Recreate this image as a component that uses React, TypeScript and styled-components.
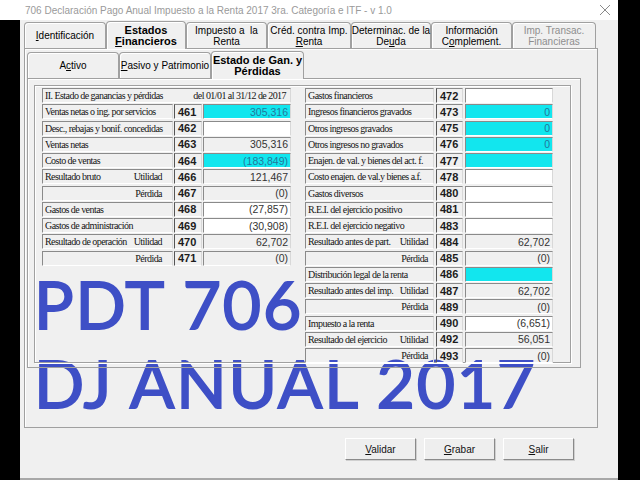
import React from 'react';
import styled, { createGlobalStyle } from 'styled-components';

const Global = createGlobalStyle`
  html, body { margin: 0; padding: 0; background: #000; }
  body { width: 640px; height: 480px; overflow: hidden; font-family: "Liberation Sans", Arial, sans-serif; }
  * { box-sizing: border-box; }
`;

const Page = styled.div`
  position: relative;
  width: 640px;
  height: 480px;
  display: flex;
  background: #000;
`;

const Main = styled.div`
  width: 618px;
  display: flex;
  flex-direction: column;
`;

const TitleBar = styled.div`
  height: 20px;
  background: #fff;
  display: flex;
  align-items: center;
  justify-content: space-between;
  padding: 0 7px 0 25px;
`;

const Title = styled.span`
  font-size: 10px;
  color: #9a9a9a;
  white-space: nowrap;
`;

const Body = styled.div`
  flex: 1;
  display: flex;
  min-height: 0;
`;

const LeftEdge = styled.div`
  width: 21px;
  background: #000;
`;

const Window = styled.div`
  flex: 1;
  background: #f0f0f0;
  border-bottom: 2px solid #a8a8a8;
  padding: 1px 20px 0 4px;
  display: flex;
  flex-direction: column;
`;

const TabRow = styled.div<{ $h: number }>`
  display: flex;
  align-items: flex-end;
  height: ${p => p.$h}px;
  position: relative;
  z-index: 2;
`;

const Tab = styled.div<{ $w: number; $active?: boolean; $disabled?: boolean; $h: number }>`
  width: ${p => p.$w}px;
  height: ${p => (p.$active ? p.$h + 2 : p.$h)}px;
  margin-bottom: ${p => (p.$active ? -1 : 0)}px;
  background: #f0f0f0;
  border: 1px solid #a0a0a0;
  border-bottom: none;
  box-shadow: inset 1px 1px 0 #fff;
  border-radius: 4px 4px 0 0;
  display: flex;
  flex-direction: column;
  align-items: center;
  justify-content: center;
  text-align: center;
  font-size: ${p => (p.$active ? 11 : 10)}px;
  font-weight: ${p => (p.$active ? 700 : 400)};
  line-height: 11px;
  color: ${p => (p.$disabled ? '#8e8e8e' : '#000')};
  white-space: nowrap;
`;

const U = styled.span`
  text-decoration: underline;
`;

const Panel = styled.div<{ $w: number; $h: number; $pad: string }>`
  width: ${p => p.$w}px;
  height: ${p => p.$h}px;
  border: 1px solid #a0a0a0;
  box-shadow: inset 1px 1px 0 #fff;
  padding: ${p => p.$pad};
  display: flex;
  flex-direction: column;
  position: relative;
  z-index: 1;
`;

const GroupBox = styled.div`
  width: 537px;
  height: 278px;
  border: 1px solid #a0a0a0;
  box-shadow: inset 1px 1px 0 #fff, 1px 1px 0 #fff;
  padding: 2px 0 0 7px;
  display: flex;
  gap: 14px;
  align-items: flex-start;
`;

const Column = styled.div<{ $cols: string; $colGap: number }>`
  display: grid;
  grid-template-columns: ${p => p.$cols};
  grid-auto-rows: 15px;
  column-gap: ${p => p.$colGap}px;
  row-gap: 1.25px;
`;

const Cell = styled.div`
  height: 15px;
  border: 1px solid;
  border-color: #8a8a8a #d8d8d8 #fff #8a8a8a;
  display: flex;
  align-items: center;
  white-space: nowrap;
  overflow: hidden;
`;

const LabelCell = styled(Cell)<{ $sidePad: number }>`
  justify-content: space-between;
  gap: 4px;
  padding: 0 ${p => p.$sidePad}px 0 2px;
  font-family: "Liberation Serif", "Times New Roman", serif;
  font-size: 10px;
  letter-spacing: -0.55px;
  color: #151515;
`;

const HeaderCell = styled(LabelCell)`
  grid-column: 1 / -1;
  padding-right: 4px;
`;

const CodeCell = styled(Cell)`
  padding-left: 3px;
  font-size: 11px;
  font-weight: 700;
  color: #1c1c1c;
  border-left-color: #555;
`;

const ValueCell = styled(Cell)<{ $bg: 'cyan' | 'white' | 'none' }>`
  justify-content: flex-end;
  padding-right: 2px;
  font-size: 10.5px;
  background: ${p => (p.$bg === 'cyan' ? '#12e6ee' : p.$bg === 'white' ? '#fff' : 'transparent')};
  color: ${p => (p.$bg === 'cyan' ? '#22789c' : '#333')};
`;

const ButtonRow = styled.div`
  display: flex;
  justify-content: flex-end;
  gap: 8px;
  padding-right: 24px;
  margin-top: 10px;
`;

const Button = styled.div`
  width: 71px;
  height: 22px;
  background: #eeeeee;
  border: 1px solid;
  border-color: #fff #8a8a8a #8a8a8a #fff;
  box-shadow: 1px 1px 0 #d0d0d0;
  display: flex;
  align-items: center;
  justify-content: center;
  font-size: 10px;
  color: #111;
`;

const RightEdge = styled.div`
  flex: 1;
  background: #000;
`;

const BigText = styled.div<{ $top: number }>`
  position: absolute;
  left: 34px;
  top: ${p => p.$top}px;
  font-family: Lato, "Open Sans", sans-serif;
  font-weight: 400;
  font-size: 66px;
  line-height: 48px;
  color: #3e4fc6;
  -webkit-text-stroke: 1.8px #3e4fc6;
  white-space: nowrap;
  letter-spacing: 1.8px;
`;

type Row = { label: string; side?: string; code: string; value: string; bg: 'cyan' | 'white' | 'none' };

const leftRows: Row[] = [
  { label: 'Ventas netas o ing. por servicios', code: '461', value: '305,316', bg: 'cyan' },
  { label: 'Desc., rebajas y bonif. concedidas', code: '462', value: '', bg: 'white' },
  { label: 'Ventas netas', code: '463', value: '305,316', bg: 'none' },
  { label: 'Costo de ventas', code: '464', value: '(183,849)', bg: 'cyan' },
  { label: 'Resultado bruto', side: 'Utilidad', code: '466', value: '121,467', bg: 'none' },
  { label: '', side: 'Pérdida', code: '467', value: '(0)', bg: 'none' },
  { label: 'Gastos de ventas', code: '468', value: '(27,857)', bg: 'white' },
  { label: 'Gastos de administración', code: '469', value: '(30,908)', bg: 'white' },
  { label: 'Resultado de operación', side: 'Utilidad', code: '470', value: '62,702', bg: 'none' },
  { label: '', side: 'Pérdida', code: '471', value: '(0)', bg: 'none' },
];

const rightRows: Row[] = [
  { label: 'Gastos financieros', code: '472', value: '', bg: 'white' },
  { label: 'Ingresos financieros gravados', code: '473', value: '0', bg: 'cyan' },
  { label: 'Otros ingresos gravados', code: '475', value: '0', bg: 'cyan' },
  { label: 'Otros ingresos no gravados', code: '476', value: '0', bg: 'cyan' },
  { label: 'Enajen. de val. y bienes del act. f.', code: '477', value: '', bg: 'cyan' },
  { label: 'Costo enajen. de val.y bienes a.f.', code: '478', value: '', bg: 'white' },
  { label: 'Gastos diversos', code: '480', value: '', bg: 'white' },
  { label: 'R.E.I. del ejercicio positivo', code: '481', value: '', bg: 'white' },
  { label: 'R.E.I. del ejercicio negativo', code: '483', value: '', bg: 'white' },
  { label: 'Resultado antes de part.', side: 'Utilidad', code: '484', value: '62,702', bg: 'none' },
  { label: '', side: 'Pérdida', code: '485', value: '(0)', bg: 'none' },
  { label: 'Distribución legal de la renta', code: '486', value: '', bg: 'cyan' },
  { label: 'Resultado antes del imp.', side: 'Utilidad', code: '487', value: '62,702', bg: 'none' },
  { label: '', side: 'Pérdida', code: '489', value: '(0)', bg: 'none' },
  { label: 'Impuesto a la renta', code: '490', value: '(6,651)', bg: 'white' },
  { label: 'Resultado del ejercicio', side: 'Utilidad', code: '492', value: '56,051', bg: 'none' },
  { label: '', side: 'Pérdida', code: '493', value: '(0)', bg: 'none' },
];

const renderRows = (rows: Row[], sidePad: number) =>
  rows.map(r => (
    <React.Fragment key={r.code}>
      <LabelCell $sidePad={sidePad}>
        <span>{r.label}</span>
        {r.side && <span>{r.side}</span>}
      </LabelCell>
      <CodeCell>{r.code}</CodeCell>
      <ValueCell $bg={r.bg}>{r.value}</ValueCell>
    </React.Fragment>
  ));

const CloseIcon = () => (
  <svg width="12" height="12" viewBox="0 0 12 12">
    <path d="M1 1 L11 11 M11 1 L1 11" stroke="#8a8a8a" strokeWidth="1" />
  </svg>
);

export default function App() {
  return (
    <>
      <Global />
      <Page>
        <Main>
          <TitleBar>
            <Title>706 Declaración Pago Anual Impuesto a la Renta 2017 3ra. Categoría e ITF - v 1.0</Title>
            <CloseIcon />
          </TitleBar>
          <Body>
            <LeftEdge />
            <Window>
              <TabRow $h={27}>
                <Tab $w={82} $h={26}><span><U>I</U>dentificación</span></Tab>
                <Tab $w={80} $h={26} $active><span>Estados</span><span><U>F</U>inancieros</span></Tab>
                <Tab $w={81} $h={26}><span>Impuesto a&nbsp; la</span><span>Renta</span></Tab>
                <Tab $w={84} $h={26}><span>Créd. contra Imp.</span><span><U>R</U>enta</span></Tab>
                <Tab $w={80} $h={26}><span>Determinac. de la</span><span>De<U>u</U>da</span></Tab>
                <Tab $w={81} $h={26}><span>Información</span><span>C<U>o</U>mplement.</span></Tab>
                <Tab $w={84} $h={26} $disabled><span>Imp. Transac.</span><span>Financieras</span></Tab>
              </TabRow>
              <Panel $w={574} $h={380} $pad="1px 0 0 2px">
                <TabRow $h={28}>
                  <Tab $w={92} $h={26}><span>A<U>c</U>tivo</span></Tab>
                  <Tab $w={92} $h={26}><span><U>P</U>asivo y Patrimonio</span></Tab>
                  <Tab $w={93} $h={26} $active><span>Estado de Gan. y</span><span>Pérdidas</span></Tab>
                </TabRow>
                <Panel $w={554} $h={290} $pad="6px 0 0 6px">
                  <GroupBox>
                    <Column $cols="131px 28px 88px" $colGap={1}>
                      <HeaderCell $sidePad={4}>
                        <span>II. Estado de ganancias y pérdidas</span>
                        <span>del 01/01 al 31/12 de 2017</span>
                      </HeaderCell>
                      {renderRows(leftRows, 10)}
                    </Column>
                    <Column $cols="129px 27px 88px" $colGap={2}>
                      {renderRows(rightRows, 5)}
                    </Column>
                  </GroupBox>
                </Panel>
              </Panel>
              <ButtonRow>
                <Button><span><U>V</U>alidar</span></Button>
                <Button><span><U>G</U>rabar</span></Button>
                <Button><span><U>S</U>alir</span></Button>
              </ButtonRow>
            </Window>
          </Body>
        </Main>
        <RightEdge />
        <BigText $top={280}>PDT 706</BigText>
        <BigText $top={359}>DJ ANUAL 2017</BigText>
      </Page>
    </>
  );
}
